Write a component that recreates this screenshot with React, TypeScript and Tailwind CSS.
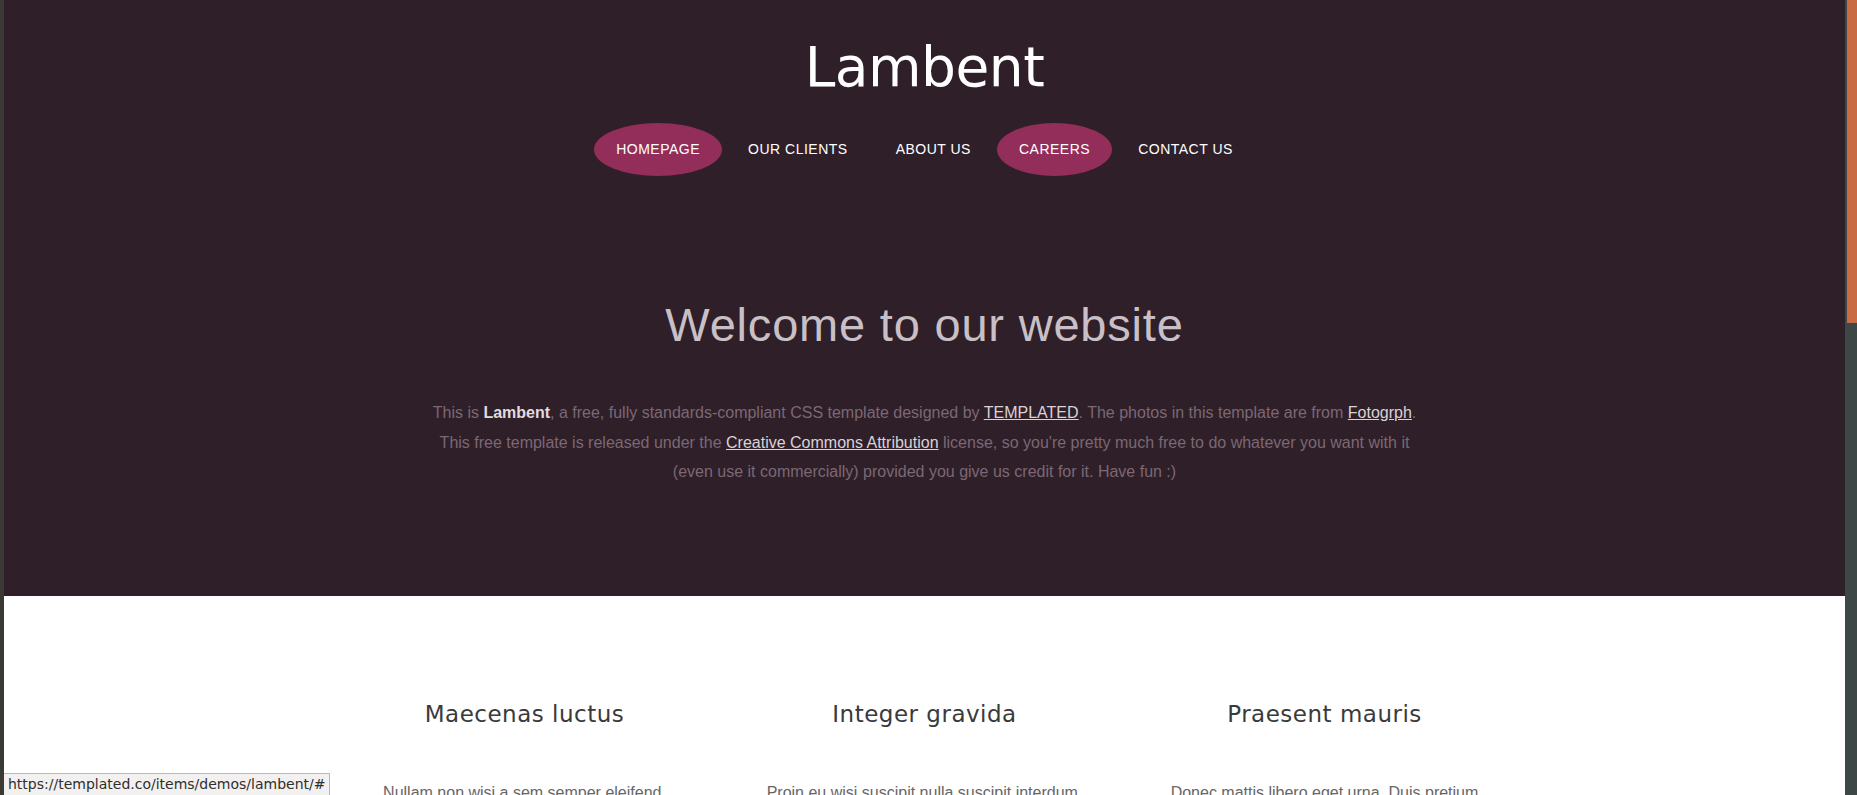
const navItems = [
  { label: 'Homepage', active: true },
  { label: 'Our Clients', active: false },
  { label: 'About Us', active: false },
  { label: 'Careers', active: true },
  { label: 'Contact Us', active: false },
];

const columns = [
  {
    title: 'Maecenas luctus',
    lines: ['Nullam non wisi a sem semper eleifend.', 'Donec mattis libero eget urna. Duis pretium', 'velit ac mauris. Proin eu wisi suscipit nulla.'],
  },
  {
    title: 'Integer gravida',
    lines: ['Proin eu wisi suscipit nulla suscipit interdum.', 'Aenean lectus lorem, imperdiet at, ultrices eget,', 'ornare et, wisi. Pellentesque adipiscing purus.'],
  },
  {
    title: 'Praesent mauris',
    lines: ['Donec mattis libero eget urna. Duis pretium', 'velit ac mauris. Proin eu wisi suscipit nulla', 'suscipit interdum. Aenean lectus lorem.'],
  },
];

function NavBar() {
  return (
    <nav className="mt-[28px] flex items-center gap-[4px]">
      {navItems.map((item) => (
        <a
          key={item.label}
          href="#"
          className={`flex h-[53px] items-center rounded-[50%] px-[22px] text-[14px] uppercase tracking-[0.5px] text-white ${
            item.active ? 'bg-[#932d59]' : ''
          }`}
        >
          {item.label}
        </a>
      ))}
    </nav>
  );
}

export default function App() {
  return (
    <div className="flex h-screen w-full overflow-hidden bg-white font-['Liberation_Sans',Arial,sans-serif]">
      <div className="w-[4px] shrink-0 bg-[#3b3934]" />

      <div className="relative flex-1 overflow-hidden">
        {/* header / banner */}
        <header className="flex h-[596px] flex-col items-center bg-[#2f1f29] pt-[40px]">
          <h1 className="font-['DejaVu_Sans',sans-serif] text-[55px] leading-none tracking-[-0.5px] text-white">
            Lambent
          </h1>
          <NavBar />

          <h2 className="mt-[125px] text-[47px] leading-none tracking-[0.8px] text-[#c9c0c7]">
            Welcome to our website
          </h2>
          <p className="mt-[50px] text-center text-[16px] leading-[29.6px] text-[#7b6874]">
            This is <strong className="font-bold text-[#e2dce0]">Lambent</strong>, a free, fully standards-compliant CSS
            template designed by{' '}
            <a href="#" className="text-[#d9d2d7] underline">
              TEMPLATED
            </a>
            . The photos in this template are from{' '}
            <a href="#" className="text-[#d9d2d7] underline">
              Fotogrph
            </a>
            .<br />
            This free template is released under the{' '}
            <a href="#" className="text-[#d9d2d7] underline">
              Creative Commons Attribution
            </a>{' '}
            license, so you're pretty much free to do whatever you want with it
            <br />
            (even use it commercially) provided you give us credit for it. Have fun :)
          </p>
        </header>

        {/* three columns */}
        <section className="pt-[107px]">
          <div className="mx-auto grid w-[1200px] grid-cols-3">
            {columns.map((col) => (
              <div key={col.title} className="text-center">
                <h3 className="font-['DejaVu_Sans',sans-serif] text-[23px] leading-none tracking-[0.5px] text-[#3a3a3a]">
                  {col.title}
                </h3>
                <p className="mt-[52px] text-[16px] leading-[29.6px] text-[#666]">
                  {col.lines.map((l, i) => (
                    <span key={i} className="block">
                      {l}
                    </span>
                  ))}
                </p>
              </div>
            ))}
          </div>
        </section>

        {/* link preview in the browser's status area */}
        <div className="absolute bottom-0 left-0 flex h-[22px] items-center border-t border-r border-[#b9b9b9] bg-[#f2f1f0] pl-[4px] pr-[4px] font-['DejaVu_Sans',sans-serif] text-[14px] text-[#2e2e2e]">
          https://templated.co/items/demos/lambent/#
        </div>
      </div>

      <div className="w-[12px] shrink-0 bg-[#3d4745]">
        <div className="ml-[2px] h-[323px] w-[10px] bg-[#c96c45]" />
      </div>
    </div>
  );
}
